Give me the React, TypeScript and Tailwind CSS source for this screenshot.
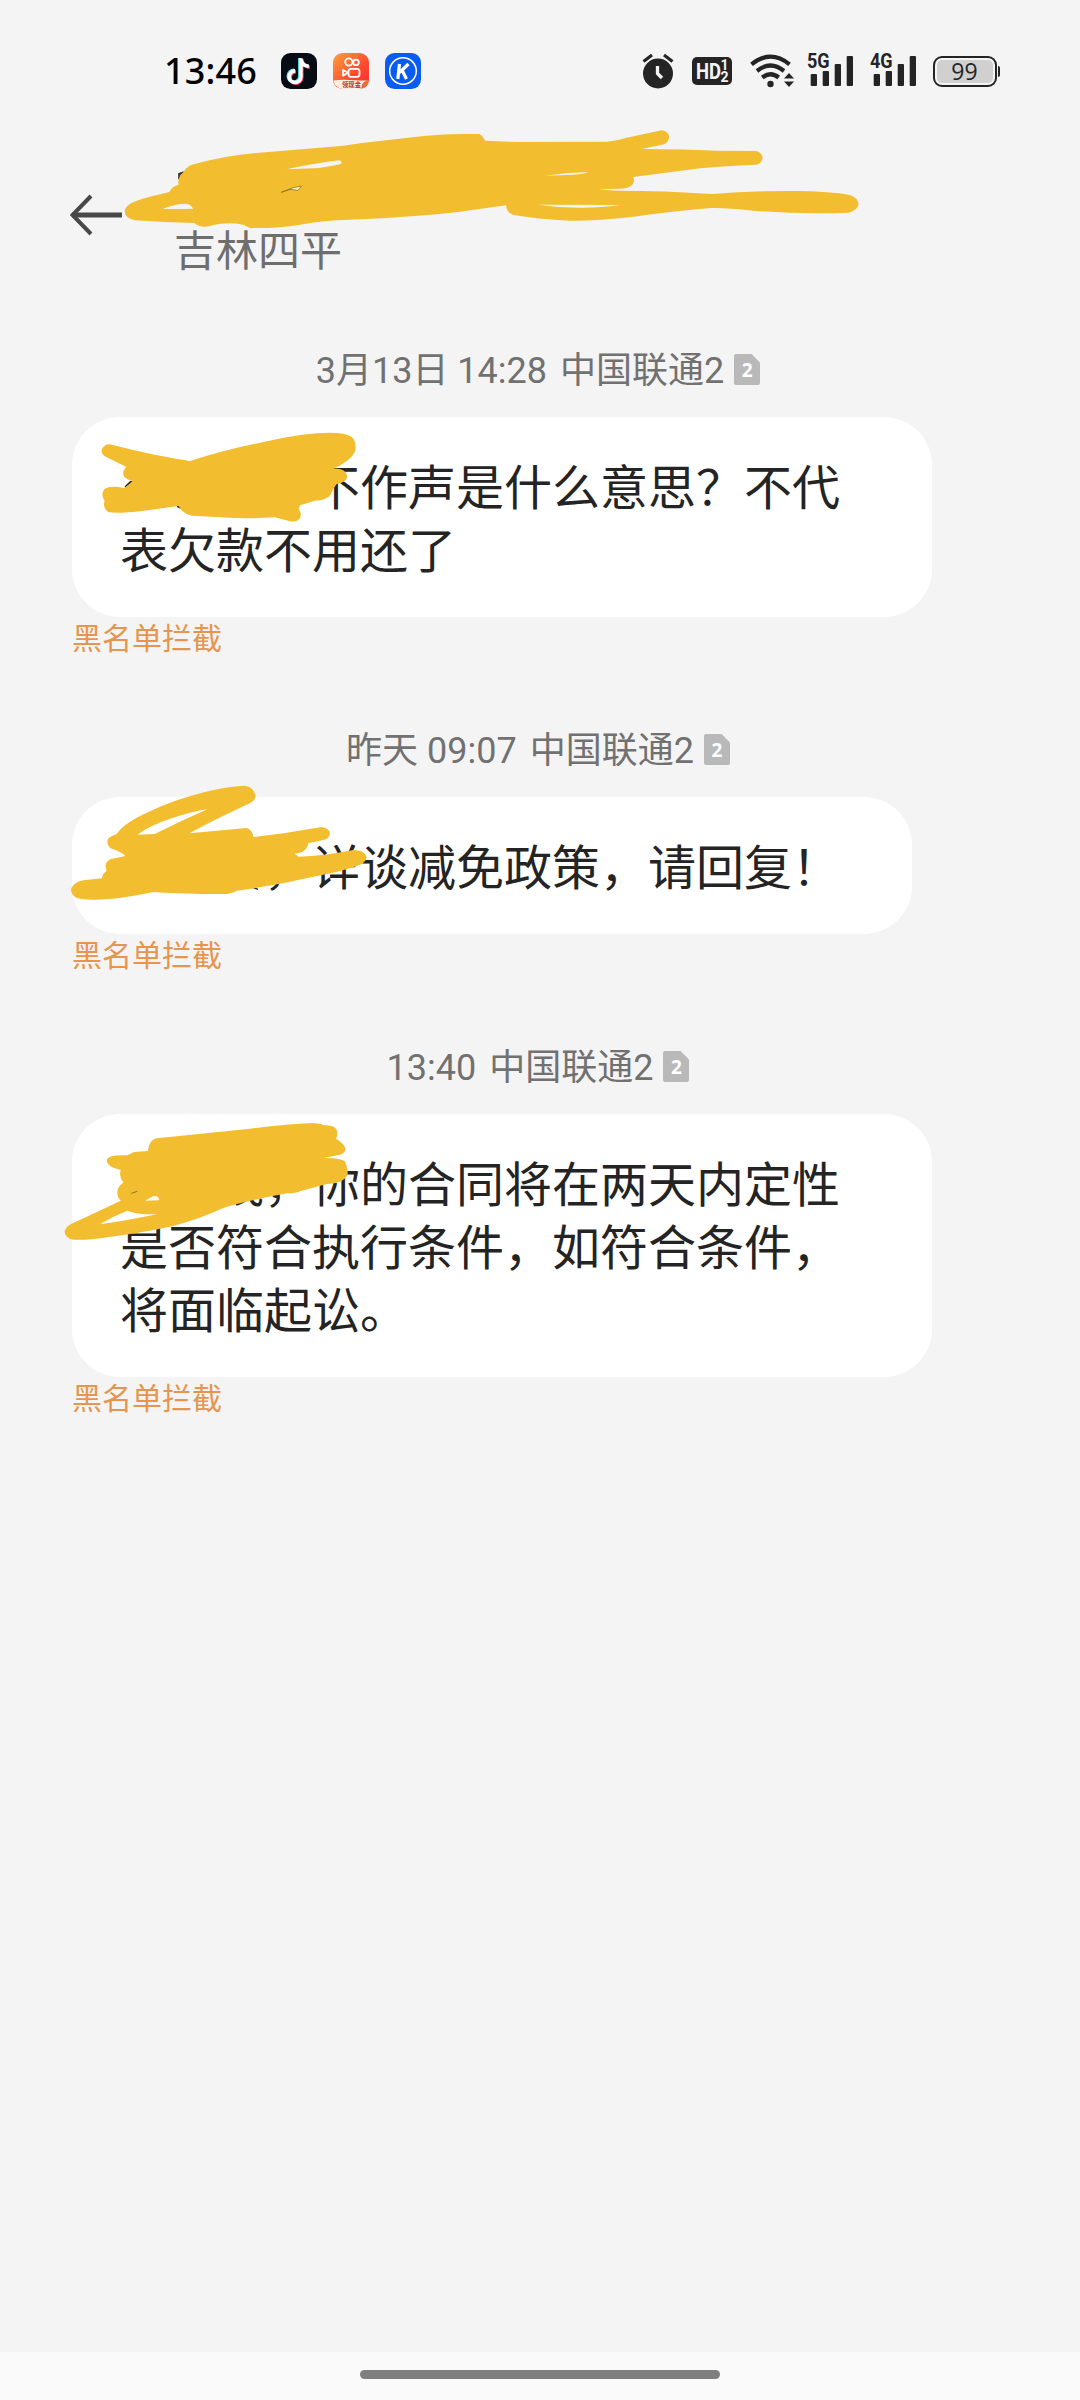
import type { ReactNode } from "react";

const INK = "#242424";
const MARKER = "#f2be30";

function StatusBar() {
  return (
    <div className="flex h-[142px] shrink-0 items-center pl-[164px] pr-[80px]">
      <span className="w-[117px] font-['Noto_Sans'] text-[36px] font-medium leading-[48px] tracking-[0.200px] text-black">13:46</span>
      <div className="flex gap-4">
        <svg width="36" height="36" viewBox="0 0 36 36">
          <rect width="36" height="36" rx="9.5" fill="#060b14" />
          <g fill="none" strokeWidth="3.6">
            <path d="M18.900 5v18.2a5.8 5.8 0 1 1-5.8-5.8M18.900 6c.7 4.500 3.400 6.600 7.800 7" stroke="#5be9ea" />
            <path d="M20.800 6v18.500a5.800 5.800 0 1 1-5.800-5.800M20.800 7c.7 4.500 3.600 6.600 8 7.500" stroke="#f0425e" />
            <path d="M19.900 5.200v18.500a5.800 5.800 0 1 1-5.800-5.800M19.900 6c.7 4.800 3.400 7 7.900 7.300" stroke="#fff" />
          </g>
        </svg>
        <svg width="36" height="36" viewBox="0 0 36 36">
          <defs>
            <linearGradient id="ks" x1="0" y1="0" x2="1" y2="1">
              <stop offset="0" stopColor="#ffa23a" />
              <stop offset="0.6" stopColor="#fb4a30" />
              <stop offset="1" stopColor="#f52c35" />
            </linearGradient>
          </defs>
          <rect width="36" height="36" rx="9.500" fill="url(#ks)" />
          <path d="M0.500 27.500 C12 25.500 24 28 35 27.500 L30 35 L26 36 H9.500 Q2 35 0.500 27.500Z" fill="#fff1e2" />
          <path d="M28.500 35.500 C28 31 31 27.500 35.800 27 Q35.500 34 28.500 35.500Z" fill="#ef6a3a" />
          <g fill="none" stroke="#fff" strokeWidth="1.800">
            <circle cx="15.800" cy="9" r="3.600" />
            <circle cx="23" cy="9.400" r="2.800" />
            <rect x="15.500" y="15.800" width="11" height="8" rx="2.500" />
            <path d="M15 19.800l-5-2.800v5.600z" strokeLinejoin="round" />
          </g>
          <text x="18.500" y="34" textAnchor="middle" fontSize="6.300" fontWeight="bold" fill="#b4391f" fontFamily="Noto Sans CJK SC, sans-serif">领现金</text>
        </svg>
        <svg width="36" height="36" viewBox="0 0 36 36">
          <rect width="36" height="36" rx="9.500" fill="#0a5cf0" />
          <circle cx="18" cy="18" r="13.300" fill="none" stroke="#fff" strokeWidth="1.500" />
          <path d="M14.500 11L12.800 26M23.500 11L14.500 19.500M17.200 17.500L21.500 26" fill="none" stroke="#fff" strokeWidth="3.200" />
        </svg>
      </div>
      <div className="ml-auto flex items-center">
        <svg width="34" height="36" viewBox="0 0 34 36" className="mr-[17px]">
          <circle cx="17" cy="20.500" r="15" fill={INK} />
          <path d="M2.500 8.500L11 2M31.500 8.500L23 2" stroke={INK} strokeWidth="3.200" />
          <path d="M16.500 13v7.500l4.500 4.500" fill="none" stroke="#f4f4f4" strokeWidth="3.300" />
        </svg>
        <div className="relative mr-[17px] h-[28px] w-[40px] rounded-[5px] bg-[#242424] font-['Roboto'] font-bold text-[#f4f4f4]">
          <span className="absolute left-[4px] top-0 origin-left scale-x-[0.84] text-[22px] leading-[29px]">HD</span>
          <span className="absolute right-[3px] top-[2px] text-[14px] leading-[12px]">1<br />2</span>
        </div>
        <svg width="46" height="36" viewBox="0 0 46 36" className="mr-[12px]">
          <g fill="none" stroke={INK} strokeWidth="4.200">
            <path d="M2.500 11.300Q21.500-4 40.500 11.300" />
            <path d="M8 18Q21.500 7 35 18" />
            <path d="M13.300 24.500Q21.500 18 29.700 24.500" />
          </g>
          <circle cx="21.500" cy="31" r="3.200" fill={INK} />
          <path d="M35 25.500l5-5.500 5 5.500zM35 28.500l5 5.500 5-5.500z" fill={INK} />
        </svg>
        <Signal label="5G" />
        <Signal label="4G" />
        <div className="flex items-center">
          <div className="flex h-[31px] w-[64px] items-center rounded-[9px] border-[2.500px] border-[#242424] p-[2px]">
            <div className="flex h-full w-full items-center justify-center rounded-[5px] bg-[#d0d0d0] font-['Open_Sans'] text-[23px] leading-none text-[#242424]">99</div>
          </div>
          <div className="ml-px h-[11px] w-[2.500px] rounded-r bg-[#242424]" />
        </div>
      </div>
    </div>
  );
}

function Signal({ label }: { label: string }) {
  return (
    <div className="relative mr-[16px] h-[34px] w-[47px] text-[#242424]">
      <svg width="47" height="34" viewBox="0 0 47 34" fill="currentColor">
        <rect x="3.700" y="20" width="6.300" height="12" rx="1" />
        <rect x="15.700" y="17" width="6.300" height="15" rx="1" />
        <rect x="27.700" y="10" width="6.300" height="22" rx="1" />
        <rect x="39.700" y="2" width="6.300" height="30" rx="1" />
      </svg>
      <span className="absolute left-0 top-[-1px] origin-left scale-x-[0.9] font-['Roboto'] text-[20px] font-bold leading-[17px]">{label}</span>
    </div>
  );
}

function Header() {
  return (
    <div className="relative flex h-[181px] shrink-0 pl-[70px]">
      <svg width="54" height="44" viewBox="0 0 54 44" className="mt-[51px]" fill="none" stroke="#484848">
        <path d="M2 22H52" strokeWidth="5" />
        <path d="M21 3L2.500 22L21 41" strokeWidth="4" />
      </svg>
      <span className="ml-[50px] mt-[85px] text-[42px] leading-[50px] text-[#6e6e6e]">吉林四平</span>
      <svg className="absolute left-[50px] top-[-22px]" width="830" height="170" viewBox="0 0 2490 510">
        <path d="M388 178L388 162L402 157" fill="none" stroke="#333" strokeWidth="7" />
        <path
          fill={MARKER}
          fillRule="evenodd"
          d="M232 258 C250 240 310 228 358 216 Q366 198 386 194 Q380 176 400 156 Q412 138 430 133 Q520 108 620 99 L880 77 L930 70 L1120 48 Q1180 42 1240 42 L1288 42 Q1300 48 1305 62 L1400 66 L1670 65 Q1700 63 1730 53 L1835 31 Q1858 34 1857 54 Q1854 68 1842 73 L1775 87 Q1900 88 2000 92 L2120 93 Q2138 100 2138 115 Q2134 132 2118 134 Q2050 136 1950 145 L1750 171 Q1756 190 1742 198 Q1732 206 1710 206 L1645 208 L1700 212 Q1850 212 1985 222 Q2110 212 2240 213 Q2340 214 2400 225 Q2424 234 2426 252 Q2422 272 2396 278 Q2260 284 2110 272 Q2020 262 1985 264 Q1880 272 1750 290 Q1640 303 1560 302 Q1460 297 1390 285 Q1370 278 1368 256 L1230 275 Q1100 290 900 299 Q820 301 750 314 Q680 326 600 324 L580 314 Q530 305 490 315 Q455 328 433 309 Q340 308 255 301 Q225 294 224 275 Q224 266 232 258Z
          M338 266 Q390 248 414 252 Q426 258 430 266 Q380 268 338 266Z
          M710 148 Q800 128 868 121 Q880 126 872 132 Q820 144 790 145Z
          M1484 167 Q1550 158 1614 156 Q1600 163 1570 164Z
          M1464 254 Q1590 254 1710 255 Q1650 263 1600 263 Q1530 264 1464 254Z"
        />
        <path d="M694 217L720 208L744 211L754 198L730 203Z" fill="#fff2b5" stroke="#7a6422" strokeWidth="2" />
      </svg>
    </div>
  );
}

function Stamp({ time }: { time: string }) {
  return (
    <div className="flex h-[94px] items-center justify-center pr-[4px] text-[36px] leading-[48px] text-[#717171]">
      <span className="pt-[2px]">{time}</span>
      <span className="ml-[13px] pt-[2px]">中国联通2</span>
      <span className="relative ml-[10px] h-[31px] w-[26px] -translate-y-px">
        <svg width="26" height="31" viewBox="0 0 26 31" className="block">
          <path d="M2 0H17.500L26 8.500V29Q26 31 24 31H2Q0 31 0 29V2Q0 0 2 0Z" fill="#b9b9b9" />
        </svg>
        <span className="absolute inset-0 text-center font-['Open_Sans'] text-[19px] font-bold leading-[33px] text-white">2</span>
      </span>
    </div>
  );
}

function Message({ time, lines, width, children }: { time: string; lines: string[]; width: string; children: ReactNode }) {
  return (
    <section className="mb-[41px]">
      <Stamp time={time} />
      <div className={`relative ml-[72px] rounded-[48px] bg-white pb-[34px] pl-[48px] pt-[40px] ${width}`}>
        {lines.map((line) => (
          <p key={line} className="whitespace-pre text-[48px] leading-[63px] text-[#242424]">{line}</p>
        ))}
        {children}
      </div>
      <p className="ml-[72px] h-[45px] text-[30px] leading-[43px] text-[#e6954f]">黑名单拦截</p>
    </section>
  );
}

export default function App() {
  return (
    <div className="flex h-[2400px] w-[1080px] flex-col overflow-hidden bg-[#f4f4f4] font-['Roboto','Noto_Sans_CJK_SC',sans-serif]">
      <StatusBar />
      <Header />
      <main className="flex-1">
        <Message time="3月13日 14:28" width="w-[860px]" lines={["　　　　不作声是什么意思？不代", "表欠款不用还了"]}>
          <svg className="absolute left-[-12px] top-[-87px]" width="460" height="340" viewBox="0 0 1380 1020">
            <path d="M196 472L212 456L228 460M352 528L364 534" fill="none" stroke={INK} strokeWidth="7" />
            <path
              fill={MARKER}
              d="M150 343 Q270 375 390 393 Q480 363 600 338 Q700 316 770 310 Q850 304 874 320 Q890 332 886 362 Q874 392 820 416 Q858 414 862 440 Q860 456 830 462 Q818 476 812 494 Q800 510 764 512 Q740 520 720 526 L716 536 Q726 550 720 565 Q708 580 684 572 L644 562 Q560 568 480 562 L396 557 Q366 550 356 528 L240 544 Q180 551 146 547 Q126 534 134 512 Q120 494 134 476 Q150 466 192 474 Q206 464 218 453 Q186 446 190 424 L198 410 L140 382 Q120 372 126 356 Q134 343 150 343Z"
            />
          </svg>
        </Message>
        <Message time="昨天 09:07" width="w-[840px]" lines={["　　　，详谈减免政策，请回复！"]}>
          <svg className="absolute left-[-12px] top-[-87px]" width="460" height="280" viewBox="0 0 1380 840">
            <path d="M578 532L594 538" stroke={INK} strokeWidth="4" />
            <path
              fill={MARKER}
              fillRule="evenodd"
              d="M555 227 Q580 230 587 258 Q586 274 560 284 Q460 330 388 370 L560 354 Q578 360 580 381 Q680 370 785 351 Q810 356 810 372 Q806 388 790 390 L745 400 Q742 420 722 428 L704 431 L716 440 Q790 438 880 420 Q914 420 920 442 Q918 460 890 468 Q840 486 760 500 Q640 528 530 542 Q510 554 480 552 Q370 552 280 546 Q180 568 110 569 Q60 570 46 562 Q30 550 34 534 Q44 516 70 511 L126 505 Q126 492 140 482 Q130 460 150 448 L196 438 Q182 424 150 414 Q136 398 146 384 Q156 376 170 372 Q190 340 260 308 Q340 268 450 242 Q510 228 555 227Z
              M232 374 Q270 346 330 326 Q400 304 442 298 Q360 334 284 372Z"
            />
          </svg>
        </Message>
        <Message time="13:40" width="w-[860px]" lines={["　　线，你的合同将在两天内定性", "是否符合执行条件，如符合条件，", "将面临起讼。"]}>
          <svg className="absolute left-[-22px] top-[-84px]" width="460" height="400" viewBox="0 0 1380 1200">
            <path
              fill={MARKER}
              fillRule="evenodd"
              d="M320 325 L600 296 Q730 280 790 279 Q810 280 824 286 Q856 284 862 304 Q862 320 858 326 Q882 340 887 356 Q886 372 862 376 L822 384 Q876 384 886 396 Q896 424 892 436 Q880 460 830 462 L750 484 Q740 490 712 490 Q590 512 520 534 Q450 566 370 588 Q270 610 140 626 Q80 632 62 628 Q42 618 44 602 Q50 586 76 576 Q140 546 212 512 Q192 490 210 466 L220 458 Q206 440 212 420 L190 413 Q166 402 172 386 Q180 374 232 376 L252 366 L294 363 Q296 330 320 325Z
              M150 583 Q190 558 232 542 Q256 554 320 553 Q230 572 150 583Z
              M286 512 Q314 492 322 500 Q330 506 326 511Z"
            />
            <path d="M244 490L262 484" stroke="#957426" strokeWidth="3" />
          </svg>
        </Message>
      </main>
      <div className="flex h-[48px] shrink-0 justify-center bg-[#fafafa] pt-[18px]">
        <div className="h-[9px] w-[360px] rounded-full bg-[#7f7f7f]" />
      </div>
    </div>
  );
}
